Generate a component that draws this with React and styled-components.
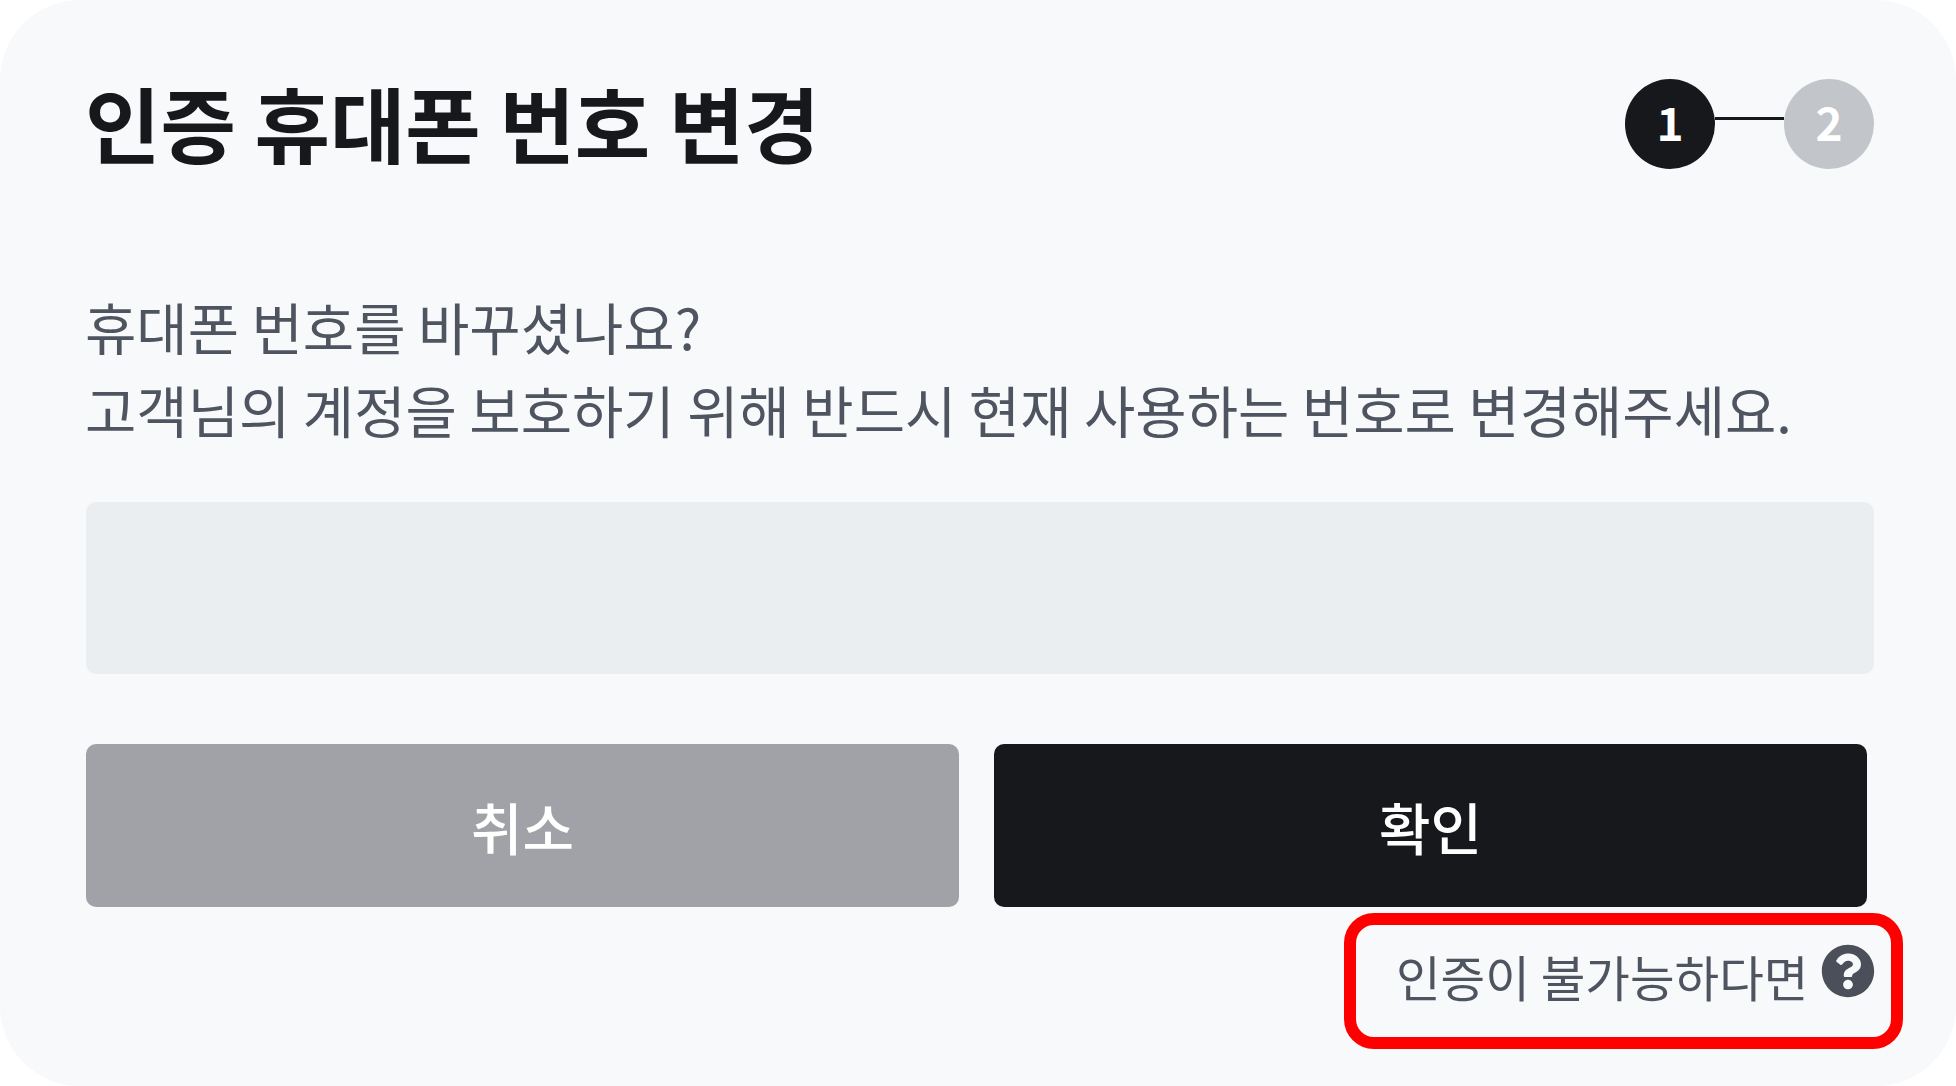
import React from "react";
import styled, { createGlobalStyle } from "styled-components";
import { FaQuestionCircle } from "react-icons/fa";

const GlobalStyle = createGlobalStyle`
  html, body {
    margin: 0;
    padding: 0;
    background: #ffffff;
  }
  * {
    box-sizing: border-box;
  }
`;

const Card = styled.div`
  width: 1956px;
  height: 1086px;
  padding: 65px 82px 0 86px;
  background-color: #f8f9fb;
  border-radius: 80px;
  overflow: hidden;
  font-family: "Noto Sans CJK KR", "Noto Sans", sans-serif;
`;

const Header = styled.div`
  display: flex;
  justify-content: space-between;
  align-items: flex-start;
  height: 219px;
`;

const Title = styled.h1`
  margin: -3px 0 0 -1px;
  font-size: 82px;
  font-weight: 700;
  line-height: 120px;
  color: #17181c;
`;

const Steps = styled.div`
  display: flex;
  align-items: flex-start;
  padding-top: 14px;
`;

const StepCircle = styled.div`
  width: 90px;
  height: 90px;
  padding-bottom: 6px;
  border-radius: 50%;
  display: flex;
  align-items: center;
  justify-content: center;
  font-size: 46px;
  font-weight: 700;
  color: #ffffff;
  background-color: ${({ active }) => (active ? "#17181c" : "#c2c5ca")};
`;

const StepLine = styled.div`
  width: 69px;
  height: 3px;
  margin-top: 38px;
  background-color: #17181c;
`;

const Description = styled.p`
  margin: 0 0 52px -1px;
  font-size: 55.8px;
  line-height: 83px;
  color: #4e5560;
`;

const PhoneInput = styled.div`
  height: 172px;
  background-color: #ebeef0;
  border-radius: 10px;
`;

const Buttons = styled.div`
  display: flex;
  gap: 35px;
  margin-top: 70px;
  padding-right: 7px;
`;

const Button = styled.button`
  flex: 1;
  height: 163px;
  padding: 0;
  border: none;
  border-radius: 10px;
  font-family: inherit;
  font-size: 56px;
  font-weight: 500;
  color: #ffffff;
  background-color: ${({ primary }) => (primary ? "#17181c" : "#a1a2a7")};
`;

const HelpRow = styled.div`
  display: flex;
  justify-content: flex-end;
  margin-top: 6px;
`;

const HelpBox = styled.div`
  position: relative;
  display: flex;
  align-items: flex-start;
  gap: 13px;
  width: 559px;
  height: 136px;
  margin-right: -29px;
  padding: 28px 26px 0 52px;
  font-size: 48.5px;
  line-height: 70px;
  color: #4e5560;
  white-space: nowrap;

  svg {
    flex: none;
    margin-top: 3px;
    color: #4a4f5a;
  }
`;

const Highlight = styled.div`
  position: absolute;
  inset: 0;
  border: 12px solid #ff0000;
  border-radius: 30px;
`;

export default function App() {
  return (
    <Card>
      <GlobalStyle />
      <Header>
        <Title>인증 휴대폰 번호 변경</Title>
        <Steps>
          <StepCircle active>1</StepCircle>
          <StepLine />
          <StepCircle>2</StepCircle>
        </Steps>
      </Header>
      <Description>
        휴대폰 번호를 바꾸셨나요?
        <br />
        고객님의 계정을 보호하기 위해 반드시 현재 사용하는 번호로 변경해주세요.
      </Description>
      <PhoneInput />
      <Buttons>
        <Button>취소</Button>
        <Button primary>확인</Button>
      </Buttons>
      <HelpRow>
        <HelpBox>
          <Highlight />
          인증이 불가능하다면
          <FaQuestionCircle size={54} />
        </HelpBox>
      </HelpRow>
    </Card>
  );
}
